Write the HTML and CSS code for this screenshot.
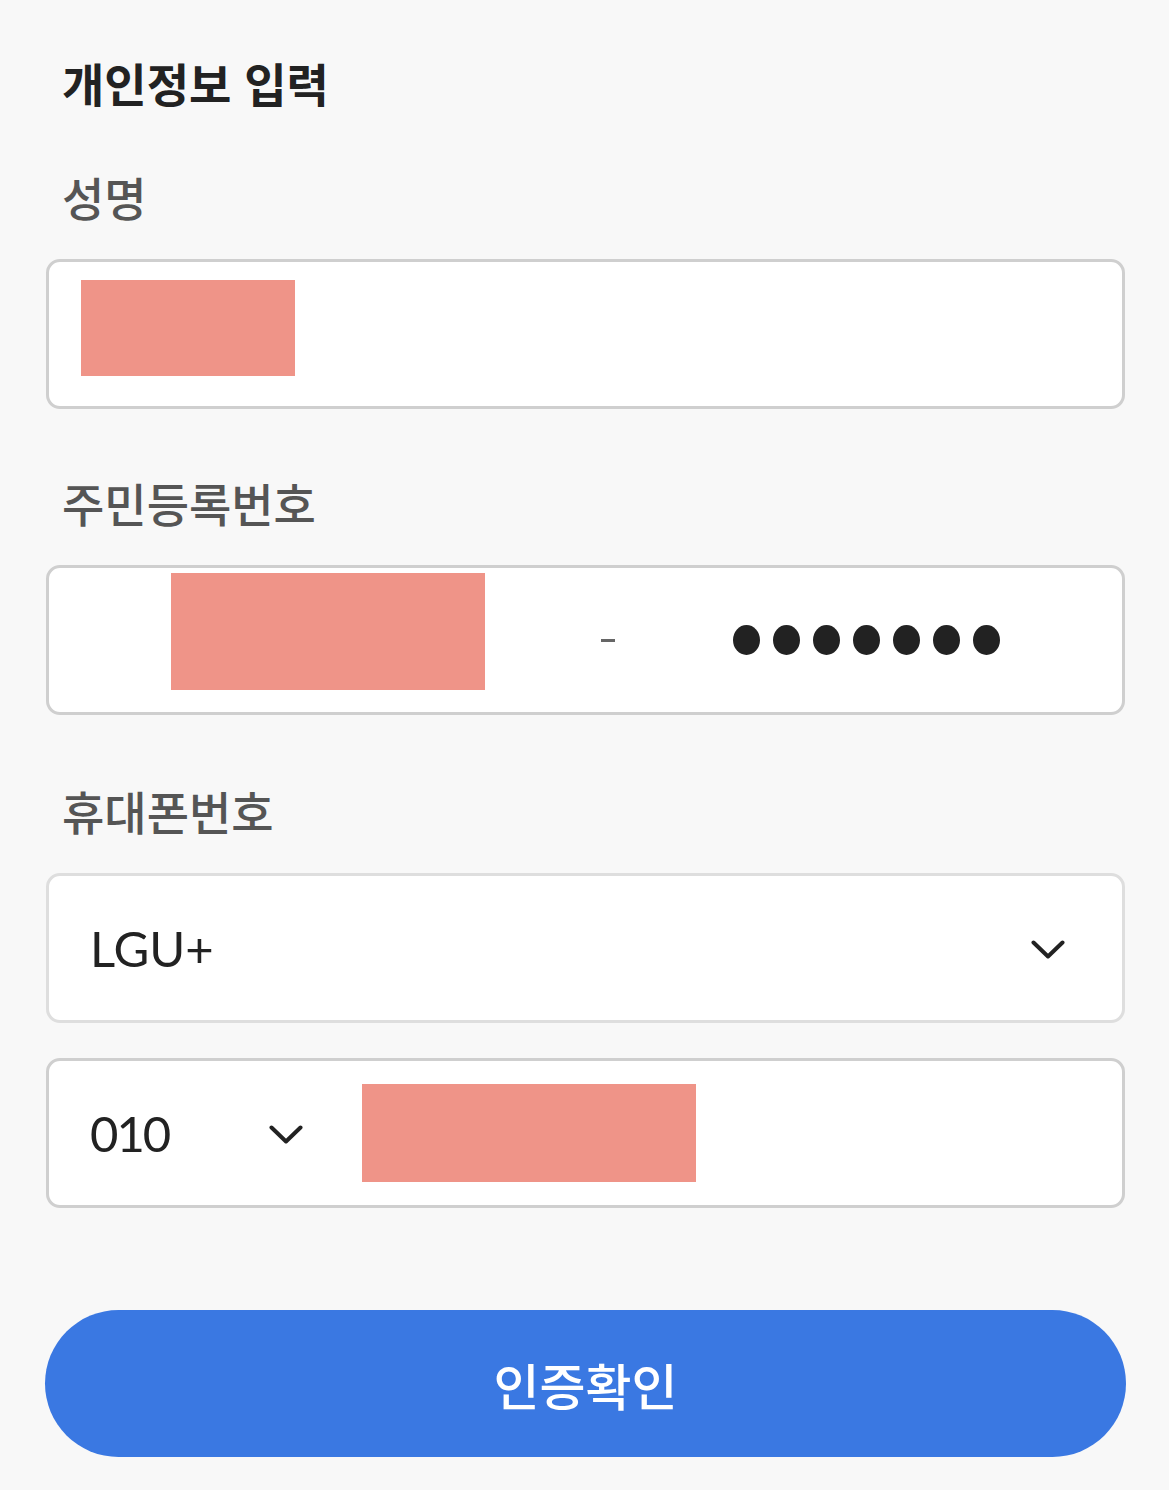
FILE: index.html
```html
<!DOCTYPE html>
<html lang="ko">
<head>
    <meta charset="UTF-8">
    <meta name="viewport" content="width=device-width, initial-scale=1.0">
    <title>개인정보 입력</title>
    <link rel="stylesheet" href="styles.css">
</head>
<body>

    <div class="container">
        <h1>개인정보 입력</h1>

        <!-- 성명 -->
        <div class="field first">
            <label>성명</label>
            <div class="box name-box">
                <span class="redact name-redact"></span>
            </div>
        </div>

        <!-- 주민등록번호 -->
        <div class="field">
            <label>주민등록번호</label>
            <div class="box rrn-box">
                <span class="redact rrn-redact"></span>
                <span class="dash"></span>
                <span class="dots">
                    <i></i><i></i><i></i><i></i><i></i><i></i><i></i>
                </span>
            </div>
        </div>

        <!-- 휴대폰번호 -->
        <div class="field phone">
            <label>휴대폰번호</label>
            <div class="box select-box carrier">
                <span class="value">LGU+</span>
                <svg class="chevron" width="34" height="20" viewBox="0 0 34 20">
                    <polyline points="2.5,2.5 17,16.5 31.5,2.5" />
                </svg>
            </div>
            <div class="box phone-box">
                <span class="value">010</span>
                <svg class="chevron small" width="34" height="20" viewBox="0 0 34 20">
                    <polyline points="2.5,2.5 17,16.5 31.5,2.5" />
                </svg>
                <span class="redact phone-redact"></span>
            </div>
        </div>

        <button class="confirm-btn">인증확인</button>
    </div>

</body>
</html>
```

FILE: styles.css
```css
:root {
    --bg-color: #f8f8f8;
    --text-dark: #222222;
    --label-color: #555555;
    --border-color: #cfcfcf;
    --redact-color: #ef9488;
    --primary-color: #3a78e2;
}

body {
    margin: 0;
    padding: 0;
    background-color: var(--bg-color);
    font-family: "Noto Sans CJK KR", "Noto Sans", sans-serif;
    color: var(--text-dark);
}

.container {
    padding: 52px 44px 30px 46px;
}

h1 {
    margin: 0;
    height: 60px;
    line-height: 60px;
    font-size: 46px;
    font-weight: 700;
    padding-left: 16px;
    color: #222;
}

.field {
    margin-top: 63px;
}

.field.first {
    margin-top: 54px;
}

.field.phone {
    margin-top: 65px;
}

label {
    display: block;
    height: 60px;
    line-height: 60px;
    font-size: 46px;
    font-weight: 500;
    color: var(--label-color);
    padding-left: 16px;
    margin-bottom: 33px;
}

.box {
    box-sizing: border-box;
    height: 150px;
    background: white;
    border: 3px solid var(--border-color);
    border-radius: 14px;
    display: flex;
    align-items: center;
}

.box + .box {
    margin-top: 35px;
}

.redact {
    display: block;
    background: var(--redact-color);
}

.name-redact {
    width: 214px;
    height: 96px;
    margin-left: 32px;
    margin-bottom: 13px;
}

.rrn-redact {
    width: 314px;
    height: 117px;
    margin-left: 122px;
    margin-bottom: 17px;
}

.dash {
    display: block;
    width: 14px;
    height: 3px;
    background: #666;
    margin-left: 116px;
}

.dots {
    display: flex;
    gap: 13px;
    margin-left: 118px;
}

.dots i {
    display: block;
    width: 27px;
    height: 30px;
    border-radius: 50%;
    background: var(--text-dark);
}

.value {
    font-family: Lato, "Open Sans", sans-serif;
    font-size: 49px;
    font-weight: 400;
    color: var(--text-dark);
    margin-left: 41px;
}

.carrier {
    border-color: #dedede;
    justify-content: space-between;
}

.chevron {
    fill: none;
    stroke: var(--text-dark);
    stroke-width: 4;
    stroke-linecap: round;
    stroke-linejoin: round;
}

.carrier .chevron {
    margin-right: 57px;
    margin-top: 4px;
}

.phone-box .value {
    width: 78px;
    letter-spacing: -2px;
    white-space: nowrap;
}

.phone-box .chevron {
    margin-left: 101px;
    margin-top: 4px;
}

.phone-redact {
    width: 334px;
    height: 98px;
    margin-left: 59px;
}

.confirm-btn {
    display: block;
    width: calc(100% + 2px);
    height: 147px;
    margin: 102px -1px 0;
    border: none;
    border-radius: 74px;
    background: var(--primary-color);
    color: white;
    font-family: "Noto Sans CJK KR", sans-serif;
    font-size: 50px;
    font-weight: 500;
    cursor: pointer;
}
```
